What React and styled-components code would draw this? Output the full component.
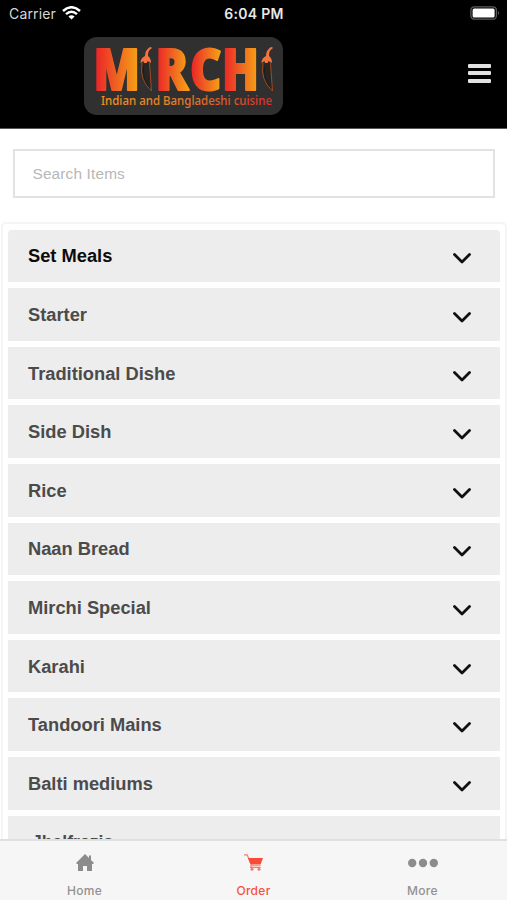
import React from "react";
import styled, { createGlobalStyle } from "styled-components";

const GlobalStyle = createGlobalStyle`
  * { box-sizing: border-box; }
  html, body { margin: 0; background: #fff; }
  body { overflow: hidden; font-family: "Liberation Sans", Arial, sans-serif; }
`;

const Screen = styled.div`
  width: 507px;
  height: 900px;
  display: flex;
  flex-direction: column;
  overflow: hidden;
  background: #fff;
`;

const Header = styled.header`
  flex: none;
  height: 129px;
  background: #000;
  border-bottom: 1px solid #585858;
`;

const StatusBar = styled.div`
  height: 28px;
  display: grid;
  grid-template-columns: 1fr auto 1fr;
  align-items: center;
  padding: 0 7px 0 9px;
  color: #e8e8e8;
  font-family: Inter, sans-serif;
  font-size: 14px;
`;

const Carrier = styled.div`
  display: flex;
  align-items: center;
  gap: 6px;
  color: #d6d6d6;
  letter-spacing: 0.15px;
  margin-top: -1px;
  svg { display: block; margin-top: -1px; }
`;

const Clock = styled.div`
  font-size: 14px;
  font-weight: 600;
  letter-spacing: 0.3px;
  margin: -1px 1px 0 0;
`;

const Battery = styled.svg`
  display: block;
  justify-self: end;
  margin-top: -2px;
`;

const Brand = styled.div`
  display: flex;
  justify-content: space-between;
  padding: 9px 16px 0 84px;
`;

const Logo = styled.svg`
  display: block;
  overflow: visible;
  border-radius: 13px;
  background: #303030;
`;

const LogoLetter = styled.text`
  font-family: "Open Sans", sans-serif;
  font-weight: 800;
  font-size: 56px;
  stroke-width: 2px;
  stroke-linejoin: round;
`;

const LogoTagline = styled.text`
  font-family: "Noto Sans", "Open Sans", sans-serif;
  font-weight: 500;
  font-size: 12px;
`;

const MenuButton = styled.button`
  width: 23px;
  height: 20px;
  margin-top: 27px;
  padding: 0;
  border: 0;
  background: none;
  display: flex;
  flex-direction: column;
  gap: 3.4px;
`;

const MenuBar = styled.span`
  width: 23px;
  height: 4px;
  border-radius: 1px;
  background: #e2e2e2;
`;

const Content = styled.main`
  flex: 1;
  min-height: 0;
  overflow: hidden;
`;

const SearchInput = styled.input`
  display: block;
  width: 482px;
  height: 49px;
  margin: 20px 0 0 13px;
  padding: 0 17.5px;
  border: 2px solid #e2e2e2;
  border-radius: 0;
  outline: none;
  font: 15.4px "Liberation Sans", Arial, sans-serif;
  letter-spacing: 0.15px;
  &::placeholder { color: #b7b7b7; opacity: 1; }
`;

const Categories = styled.div`
  margin: 23.5px 0 0 1px;
  border: 2px solid #f5f5f5;
  border-radius: 5px;
  width: 506px;
  height: 680px;
  padding: 6px 5px;
  display: flex;
  flex-direction: column;
  gap: 6px;
`;

const Category = styled.div`
  flex: none;
  height: 52.62px;
  display: flex;
  align-items: center;
  justify-content: space-between;
  padding: 1px 29px 0 ${(p) => (p.$indent ? 24 : 20)}px;
  border-radius: ${(p) => (p.$active ? "4px 4px 0 0" : "0")};
  background: #ededed;
  color: ${(p) => (p.$active ? "#0b0b0b" : "#4b4b4b")};
  font-size: ${(p) => (p.$indent ? 17.6 : 18.3)}px;
  font-weight: 700;
  line-height: 22px;
  svg { display: block; margin-top: 6px; }
`;

const TabBar = styled.nav`
  flex: none;
  height: 61px;
  display: grid;
  grid-template-columns: repeat(3, 1fr);
  border-top: 2px solid #dfdfdf;
  background: #f6f6f6;
`;

const Tab = styled.div`
  display: flex;
  flex-direction: column;
  align-items: center;
  color: ${(p) => (p.$active ? "#f55243" : "#919191")};
  font-family: Inter, sans-serif;
  font-size: 12px;
  font-weight: 500;
  line-height: 16px;
  letter-spacing: 0.3px;
  svg { display: block; margin: 13px 0 12px; }
`;

const items = [
  "Set Meals", "Starter", "Traditional Dishe", "Side Dish", "Rice",
  "Naan Bread", "Mirchi Special", "Karahi", "Tandoori Mains",
  "Balti mediums", "Jhalfrezis",
];

const letters = [
  { char: "M", x: 9.5, width: 46.5 },
  { char: "R", x: 71.5, width: 33 },
  { char: "C", x: 106, width: 31.5 },
  { char: "H", x: 138, width: 37 },
];

function Chili({ x }) {
  return (
    <g transform={`translate(${x} 10)`}>
      <path d="M9.500 0q2.500 0 1.500 1.500-4 2-3.500 7.500 3 2 3 7l-3.500-2-2.500 6-1.500-6-3 2q0-5 4.500-7 0-6 5-9" fill="#f4743b" />
      <path d="M1.500 16q-3 17 9.500 28-1-14-2-28" fill="#292522" stroke="#ae4c1d" strokeWidth="0.900" />
      <path d="M3 19q-1 13 5 20" fill="none" stroke="#17201d" strokeWidth="1" />
    </g>
  );
}

function MirchiLogo() {
  return (
    <Logo width="199" height="78" viewBox="0 0 199 78" aria-label="Mirchi">
      <defs>
        <linearGradient id="flame">
          <stop offset="0.08" stopColor="#eb2927" />
          <stop offset="0.5" stopColor="#ef6321" />
          <stop offset="0.92" stopColor="#f59b16" />
        </linearGradient>
        <linearGradient id="tag">
          <stop offset="0" stopColor="#ee9622" />
          <stop offset="0.5" stopColor="#e47b27" />
          <stop offset="1" stopColor="#d7302c" />
        </linearGradient>
      </defs>
      {letters.map((l) => (
        <LogoLetter key={l.char} x={l.x} y="53" textLength={l.width} lengthAdjust="spacingAndGlyphs" fill="url(#flame)" stroke="url(#flame)">{l.char}</LogoLetter>
      ))}
      <Chili x={56.5} />
      <Chili x={177.5} />
      <LogoTagline x="17" y="67.500" textLength="171" lengthAdjust="spacingAndGlyphs" fill="url(#tag)">Indian and Bangladeshi cuisine</LogoTagline>
    </Logo>
  );
}

function Chevron() {
  return (
    <svg width="18" height="12" viewBox="0 0 18 12" fill="none">
      <path d="M1.500 1.500 9 9l7.500-7.500" stroke="#101010" strokeWidth="2.800" strokeLinecap="round" strokeLinejoin="round" />
    </svg>
  );
}

export default function App() {
  return (
    <Screen>
      <GlobalStyle />
      <Header>
        <StatusBar>
          <Carrier>
            Carrier
            <svg width="19" height="14" viewBox="0 0 19 14" fill="none" stroke="#fff" strokeWidth="2.500">
              <path d="M1 5Q9.500-2.500 18 5M4 8.200q5.500-5 11 0" />
              <path d="M9.500 13.500 6.400 10.400q3.100-2.400 6.200 0Z" fill="#fff" stroke="none" />
            </svg>
          </Carrier>
          <Clock>6:04 PM</Clock>
          <Battery width="30" height="14" viewBox="0 0 30 14">
            <rect x="0.900" y="0.800" width="25.500" height="12.400" rx="3.500" fill="none" stroke="#5c5c5c" strokeWidth="1.300" />
            <rect x="2.600" y="2.500" width="22" height="9" rx="1.500" fill="#fff" />
            <path d="M28 5q2 2 0 4Z" fill="#666" />
          </Battery>
        </StatusBar>
        <Brand>
          <MirchiLogo />
          <MenuButton aria-label="Menu"><MenuBar /><MenuBar /><MenuBar /></MenuButton>
        </Brand>
      </Header>
      <Content>
        <SearchInput placeholder="Search Items" />
        <Categories>
          {items.map((name, i) => (
            <Category key={name} $active={i === 0} $indent={i === 10}>{name}<Chevron /></Category>
          ))}
        </Categories>
      </Content>
      <TabBar>
        <Tab>
          <svg width="18" height="17" viewBox="0 0 18 17" fill="#8c8c8c">
            <path d="M0 9 9 0l4 4V1.500h2v4.500l3 3-1 1h-1v7h-5v-5H7v5H2v-7H1Z" />
          </svg>
          Home
        </Tab>
        <Tab $active>
          <svg width="20" height="17" viewBox="0 0 20 17">
            <path d="M0 .8h3.200l4.200 10.400h9.200M7.400 11l-.7 2.300h10" fill="none" stroke="#f7796d" strokeWidth="1.200" />
            <path d="M4 4h15l-2.300 6.300H6.500Z" fill="#f94b3b" />
            <circle cx="8" cy="15.200" r="1.500" fill="#f7796d" />
            <circle cx="15" cy="15.200" r="1.500" fill="#f7796d" />
          </svg>
          Order
        </Tab>
        <Tab>
          <svg width="30" height="17" viewBox="0 0 30 17" fill="#8c8c8c">
            <circle cx="4.200" cy="9" r="4.200" /><circle cx="15" cy="9" r="4.200" /><circle cx="25.800" cy="9" r="4.200" />
          </svg>
          More
        </Tab>
      </TabBar>
    </Screen>
  );
}
